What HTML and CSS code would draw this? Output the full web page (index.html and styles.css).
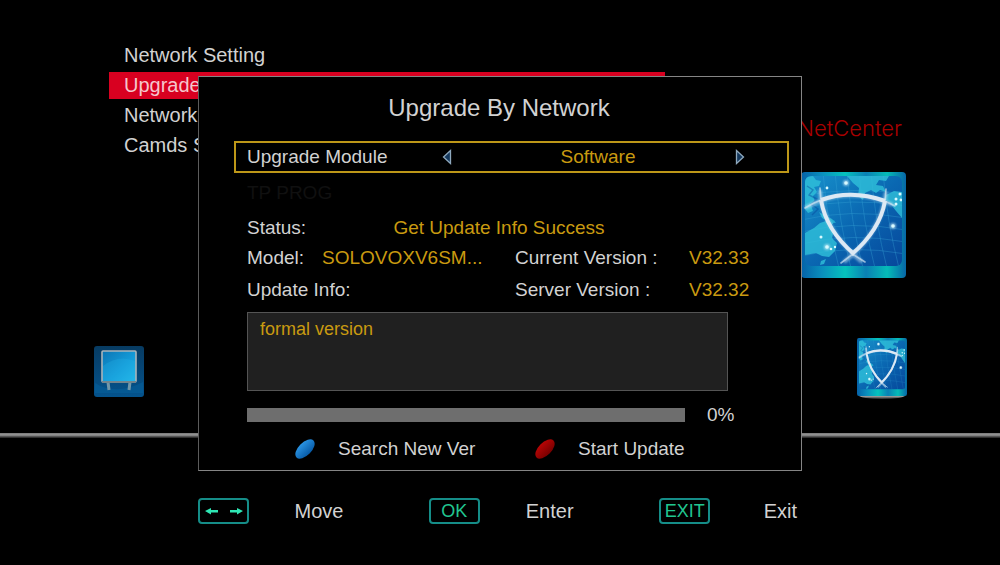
FILE: index.html
```html
<!DOCTYPE html>
<html lang="en">
<head>
<meta charset="utf-8">
<meta name="viewport" content="width=device-width, initial-scale=1">
<title>Upgrade By Network</title>
<link rel="stylesheet" href="styles.css">
</head>
<body>
<svg class="defs" width="0" height="0" aria-hidden="true">
  <defs>
    <linearGradient id="frame" x1="0" x2="1">
      <stop offset="0" stop-color="#0561a8"/><stop offset=".2" stop-color="#0a8fbd"/><stop offset=".42" stop-color="#05c3bd"/><stop offset=".62" stop-color="#0a80b4"/><stop offset=".82" stop-color="#05bcb8"/><stop offset="1" stop-color="#0766a6"/>
    </linearGradient>
    <linearGradient id="sea" x1="0" y1="0" x2="1" y2="1">
      <stop offset="0" stop-color="#1791cb"/><stop offset=".5" stop-color="#0a68b2"/><stop offset="1" stop-color="#06479b"/>
    </linearGradient>
    <linearGradient id="blue" x1="0" y1="0" x2="0" y2="1">
      <stop offset="0" stop-color="#2a94e4"/><stop offset="1" stop-color="#075aa6"/>
    </linearGradient>
    <linearGradient id="red" x1="0" y1="0" x2="0" y2="1">
      <stop offset="0" stop-color="#b80505"/><stop offset="1" stop-color="#780000"/>
    </linearGradient>
    <linearGradient id="tvback" x1="0" y1="0" x2="0" y2="1">
      <stop offset="0" stop-color="#073b62"/><stop offset="1" stop-color="#04538d"/>
    </linearGradient>
    <linearGradient id="tvscreen" x1="0" y1="0" x2="1" y2="1">
      <stop offset="0" stop-color="#0b75b4"/><stop offset=".55" stop-color="#149bd8"/><stop offset="1" stop-color="#23b8e9"/>
    </linearGradient>
    <filter id="soft" x="-20%" y="-20%" width="140%" height="140%"><feGaussianBlur stdDeviation="1.2"/></filter>
    <clipPath id="mapclip"><rect x="4" y="4" width="97" height="90" rx="6"/></clipPath>
    <symbol id="shield" viewBox="0 0 105 106" preserveAspectRatio="none">
      <rect width="105" height="106" rx="4" fill="url(#frame)"/>
      <g clip-path="url(#mapclip)">
        <rect x="4" y="4" width="97" height="90" fill="url(#sea)"/>
        <path fill="none" stroke="#38a5d8" stroke-width=".7" opacity=".5" d="M0 24Q50 14 105 22M0 36Q50 25 105 34M0 48Q50 36 105 46M0 60Q50 48 105 58M0 72Q50 60 105 70M0 84Q50 72 105 82M34 0Q38 50 50 96M46 0Q50 50 62 96M58 0Q62 50 74 96M70 0Q74 50 86 96M82 0Q86 50 98 96M22 0Q26 50 38 96"/>
        <path fill="#2fc0da" opacity=".8" d="M4 5l8-1 3 4 5 1-2 5-5 1 3 5-4 4 2 6-4 3 2 6-5 2-3-4zM46 4h42l-3 5-7-1-3 5 7 1 3 6-6-2-4 3-5-3-6 3-2 7-5-4 1-8-6-5zM85 23l8-4 8 1v26l-6-7-7-9-5-3zM4 61l9-5 6-5 6-2 3-3 6 3-4 5 3 4-2 8 5 5-2 8-6 6-7-1-6-3-11 2zM18 40l5 3 8 4 4 4-6-1-8-4zM20 89l5-2-2 5-4 1z"/>
        <path fill="none" stroke="#063f97" stroke-width="1.4" opacity=".4" d="M6 14l6 4-4 5 8 4-6 5 7 5-6 6"/>
        <g fill="#dff7ff" opacity=".6" filter="url(#soft)"><circle cx="45" cy="11" r="3"/><circle cx="92" cy="54" r="3"/><circle cx="26" cy="75" r="3"/></g>
        <g fill="#d8faff"><circle cx="45" cy="11" r="1.8"/><circle cx="26" cy="16" r="1.4"/><circle cx="99" cy="22" r="1.5"/><circle cx="95" cy="27" r="1.5"/><circle cx="95" cy="32" r="1.5"/><circle cx="100" cy="28" r="1.4"/><circle cx="92" cy="54" r="1.8"/><circle cx="20" cy="65" r="1.5"/><circle cx="26" cy="75" r="1.8"/><circle cx="30" cy="77" r="1.3"/><circle cx="34" cy="75" r="1.2"/></g>
      </g>
      <g fill="none" stroke="#d5edfa" stroke-width="4" opacity=".5" filter="url(#soft)">
        <path d="M4 36Q46 12 92 33M19 18Q21 57 61 90M85 20Q81 60 43 90"/>
      </g>
      <path fill="none" stroke="#cfe2f1" stroke-width="1.6" stroke-linecap="round" opacity=".7" d="M4 36Q12 31 20 28M19 16L20 30M85 17L84 30M84 29L94 34M50 81L64 90M53 81L40 91"/>
      <path fill="none" stroke="#dde9f4" stroke-width="4" d="M20 28Q50 17 84 29M20 28Q25 58 53 82M84 29Q79 58 51 82"/>
    </symbol>
  </defs>
</svg>

<main class="scene">
  <div class="top">
    <ul class="menu">
      <li>Network Setting</li>
      <li class="active">Upgrade By Network</li>
      <li>Network App</li>
      <li>Camds Setting</li>
    </ul>
    <section class="center">
      <h2>NetCenter</h2>
      <svg class="big" aria-hidden="true"><use href="#shield"/></svg>
    </section>
  </div>
  <div class="carousel">
    <svg class="tv" viewBox="0 0 50 51" aria-hidden="true">
      <rect width="50" height="51" rx="3" fill="url(#tvback)"/>
      <path d="M1 37Q22 50 49 36v11H1z" fill="#05619d" opacity=".5"/>
      <path d="M14 36l1 8M36 36l-1 8" stroke="#7197a9" stroke-width="3"/>
      <rect x="8" y="5" width="34" height="31" rx="1" fill="url(#tvscreen)" stroke="#aab4ba" stroke-width="1.6"/>
      <path d="M9 20Q24 8 41 15v20H9z" fill="#28b9ed" opacity=".25"/>
      <path d="M8 36h34" stroke="#72858e" stroke-width="2"/>
    </svg>
    <div class="small">
      <svg aria-hidden="true"><use href="#shield"/></svg>
      <span class="glow"></span>
    </div>
  </div>
  <hr class="rule">
  <footer class="keys">
    <div class="hint"><kbd><svg width="40" height="10" viewBox="0 0 40 10" aria-hidden="true"><path d="M1 5l6-3v2h7v2.500H7v2zM39 5l-6-3v2h-7v2.500h7v2z" fill="#2ee6b4"/></svg></kbd><span>Move</span></div>
    <div class="hint"><kbd>OK</kbd><span>Enter</span></div>
    <div class="hint"><kbd>EXIT</kbd><span>Exit</span></div>
  </footer>
</main>

<div class="dialog" role="dialog" aria-labelledby="title">
  <h1 id="title">Upgrade By Network</h1>
  <div class="module">
    <span class="name">Upgrade Module</span>
    <button class="arrow" aria-label="Previous module"><svg width="10" height="16" viewBox="0 0 10 16"><path d="M8.500 1.500v13L1.500 8z" fill="#14375c" stroke="#8fa9be" stroke-width="1.300"/></svg></button>
    <output class="gold">Software</output>
    <button class="arrow" aria-label="Next module"><svg width="10" height="16" viewBox="0 0 10 16"><path d="M1.500 1.500v13L8.500 8z" fill="#14375c" stroke="#8fa9be" stroke-width="1.300"/></svg></button>
  </div>
  <div class="body">
    <p class="faint">TP PROG</p>
    <div class="status"><span>Status:</span><span class="gold">Get Update Info Success</span></div>
    <div class="info">
      <span>Model:</span><span class="gold">SOLOVOXV6SM...</span><span>Current Version :</span><span class="gold">V32.33</span>
      <label class="wide" for="notes">Update Info:</label><span>Server Version :</span><span class="gold">V32.32</span>
    </div>
    <textarea id="notes" class="notes" readonly>formal version</textarea>
    <div class="load"><progress id="load" max="100" value="0"></progress><label for="load">0%</label></div>
    <div class="actions">
      <button><svg width="22" height="22" viewBox="0 0 22 22" aria-hidden="true"><ellipse cx="11" cy="11" rx="12" ry="6.500" transform="rotate(-45 11 11)" fill="url(#blue)"/></svg>Search New Ver</button>
      <button><svg width="22" height="22" viewBox="0 0 22 22" aria-hidden="true"><ellipse cx="11" cy="11" rx="12" ry="6.500" transform="rotate(-45 11 11)" fill="url(#red)"/></svg>Start Update</button>
    </div>
  </div>
</div>
</body>
</html>
```
FILE: styles.css
```css
* { box-sizing: border-box; }

body {
  margin: 0;
  position: relative;
  min-height: 100vh;
  background: #000;
  color: #d2d2d2;
  font: 19px/24px "Liberation Sans", Arial, sans-serif;
}

h1, h2, p, ul { margin: 0; padding: 0; font-weight: 400; }

button {
  padding: 0;
  border: 0;
  background: none;
  color: inherit;
  font: inherit;
}

svg { display: block; }
.defs { position: absolute; }
.gold { color: #c99a10; }

.scene { padding-top: 42px; }

.top {
  display: flex;
  justify-content: space-between;
  padding: 0 94px 0 109px;
}

.menu {
  display: grid;
  align-content: start;
  gap: 3px;
  flex: 0 1 556px;
  list-style: none;
  font-size: 20px;
  line-height: 27px;
}
.menu li { padding-left: 15px; white-space: nowrap; overflow: hidden; }
.menu .active { background: #d80020; color: #f5c6cc; }

.center {
  display: flex;
  flex-direction: column;
  align-items: flex-end;
  gap: 30px;
  padding-top: 72px;
}
.center h2 {
  padding-right: 4px;
  color: #a80000;
  font: 300 22px/28px Inter, "Liberation Sans", sans-serif;
}
.big { width: 105px; height: 106px; }

.carousel {
  display: flex;
  justify-content: space-between;
  align-items: flex-end;
  padding: 60px 93px 34px 94px;
}
.tv { width: 50px; height: 51px; margin-bottom: 2px; }
.small svg { width: 50px; height: 58px; }
.small .glow {
  display: block;
  height: 7px;
  margin: -4px 2px 0;
  border-radius: 2px 2px 50% 50%;
  background: linear-gradient(#b9e3e8, #e4e8e8 40%, #222);
}

.rule {
  height: 5px;
  margin: 0;
  border: 0;
  background: linear-gradient(#777, #999 40%, #555 70%, #1c1c1c);
}

.keys {
  display: grid;
  grid-template-columns: repeat(3, 1fr);
  padding: 60px 11% 0 19.8%;
  font-size: 20px;
}
.hint { display: flex; align-items: center; }
.hint span { flex: 0 0 140px; text-align: center; }
kbd {
  display: flex;
  align-items: center;
  justify-content: center;
  flex: 0 0 51px;
  height: 26px;
  border: 2px solid #158d88;
  border-radius: 4px;
  color: #20c690;
  font: 18px/22px "Liberation Sans", Arial, sans-serif;
}

.dialog {
  position: absolute;
  top: 76px;
  left: 19.8%;
  right: 19.8%;
  padding: 16px 12px 0 35px;
  border: 1px solid #858585;
  border-left-color: #5c5c5c;
  background: #000;
}
.dialog h1 {
  padding-right: 25px;
  font-size: 24px;
  line-height: 30px;
  text-align: center;
}

.module {
  display: grid;
  grid-template-columns: 187px 26px 1fr 26px 34px;
  align-items: center;
  height: 32px;
  margin-top: 18px;
  padding-left: 11px;
  border: 2px solid #bd9718;
}
.module output { padding-left: 9px; text-align: center; }
.arrow { display: grid; place-items: center; }

.body { padding: 8px 38px 0 13px; }
.faint { color: #101010; }

.status {
  display: grid;
  grid-template-columns: 1fr auto 1fr;
  margin-top: 11px;
}
.info {
  display: grid;
  grid-template-columns: 75px 193px 174px 1fr;
  gap: 8px 0;
  margin-top: 6px;
  white-space: nowrap;
}
.wide { grid-column: span 2; }

.notes {
  display: block;
  width: calc(100% - 23px);
  height: 79px;
  margin-top: 10px;
  padding: 4px 12px;
  border: 1px solid #545454;
  border-radius: 0;
  outline: 0;
  resize: none;
  background: #202020;
  color: #c99a10;
  font: 18px/24px "Liberation Sans", Arial, sans-serif;
}

.load {
  display: flex;
  align-items: center;
  gap: 22px;
  margin-top: 12px;
}
progress {
  appearance: none;
  flex: 0 1 438px;
  height: 14px;
  border: 0;
  background: #6e6e6e;
}
progress::-webkit-progress-bar { background: #6e6e6e; }
progress::-webkit-progress-value { background: #c99a10; }

.actions {
  display: grid;
  grid-template-columns: 240px 1fr;
  margin-top: 10px;
  padding: 0 0 9px 47px;
}
.actions button { display: flex; align-items: center; gap: 22px; }
```
